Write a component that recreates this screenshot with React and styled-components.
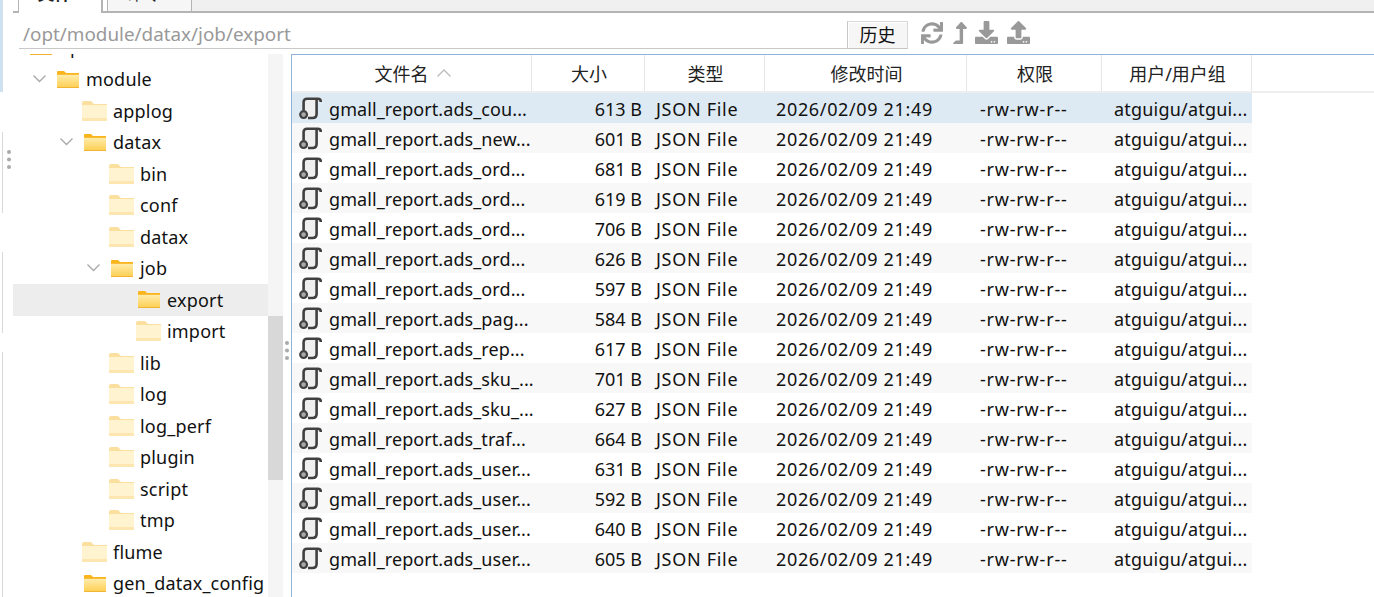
import React from "react";
import styled, { createGlobalStyle } from "styled-components";
import { FaSync, FaLevelUpAlt, FaDownload, FaUpload } from "react-icons/fa";

const FONT = `"Noto Sans", "Noto Sans CJK SC", sans-serif`;

const GlobalStyle = createGlobalStyle`
  html, body {
    margin: 0;
    height: 597px;
    overflow: hidden;
    background: #fff;
    font-family: ${FONT};
    color: #111;
  }
`;

const COLUMNS = "240px 113px 120px 202px 135px 150px";

const treeData = [
  { name: "opt", level: 0, first: true },
  { name: "module", level: 1, chevron: true },
  { name: "applog", level: 2, faded: true },
  { name: "datax", level: 2, chevron: true },
  { name: "bin", level: 3, faded: true },
  { name: "conf", level: 3, faded: true },
  { name: "datax", level: 3, faded: true },
  { name: "job", level: 3, chevron: true },
  { name: "export", level: 4, selected: true },
  { name: "import", level: 4, faded: true },
  { name: "lib", level: 3, faded: true },
  { name: "log", level: 3, faded: true },
  { name: "log_perf", level: 3, faded: true },
  { name: "plugin", level: 3, faded: true },
  { name: "script", level: 3, faded: true },
  { name: "tmp", level: 3, faded: true },
  { name: "flume", level: 2, faded: true },
  { name: "gen_datax_config", level: 2 },
];

const files = [
  ["gmall_report.ads_cou...", "613 B"],
  ["gmall_report.ads_new...", "601 B"],
  ["gmall_report.ads_ord...", "681 B"],
  ["gmall_report.ads_ord...", "619 B"],
  ["gmall_report.ads_ord...", "706 B"],
  ["gmall_report.ads_ord...", "626 B"],
  ["gmall_report.ads_ord...", "597 B"],
  ["gmall_report.ads_pag...", "584 B"],
  ["gmall_report.ads_rep...", "617 B"],
  ["gmall_report.ads_sku_...", "701 B"],
  ["gmall_report.ads_sku_...", "627 B"],
  ["gmall_report.ads_traf...", "664 B"],
  ["gmall_report.ads_user...", "631 B"],
  ["gmall_report.ads_user...", "592 B"],
  ["gmall_report.ads_user...", "640 B"],
  ["gmall_report.ads_user...", "605 B"],
];

function FolderIcon({ faded }) {
  if (faded) {
    return (
      <FadedFolderSvg viewBox="0 0 25 20">
        <path d="M0 2 Q0 0 2 0 H9 L12 3 H25 V5 H0 Z" fill="#fbdf9f" />
        <rect x="0" y="4" width="25" height="16" fill="#fff3d0" />
        <rect x="0" y="17" width="25" height="3" fill="#fde6b0" />
      </FadedFolderSvg>
    );
  }
  return (
    <FolderSvg viewBox="0 0 22 17">
      <defs>
        <linearGradient id="folderBody" x1="0" y1="0" x2="0" y2="1">
          <stop offset="0" stopColor="#ffedb0" />
          <stop offset="1" stopColor="#fdcf50" />
        </linearGradient>
      </defs>
      <path d="M0 1 Q0 0 1 0 H7 L9 2 H22 V4 H0 Z" fill="#fab51c" />
      <rect x="0" y="3" width="22" height="14" fill="url(#folderBody)" />
      <rect x="0" y="3" width="22" height="1" fill="#f9bd3a" />
      <rect x="0" y="16" width="22" height="1" fill="#f3b334" />
    </FolderSvg>
  );
}

function ScriptIcon() {
  return (
    <ScriptSvg viewBox="0 0 23 23">
      <path d="M5 14 V5 Q5 2 8 2 H20 V5 H18 V17 Q18 21 14 21 H8 Z" fill="#efefef" />
      <path
        d="M4.6 13 V5 Q4.6 1.8 8 1.8 H19 Q21.8 1.8 21.8 5 M17.6 2.5 V17 Q17.6 21 13.5 21 H9"
        fill="none"
        stroke="#404040"
        strokeWidth="2.6"
      />
      <circle cx="4.6" cy="17.6" r="3.4" fill="#a8a8a8" stroke="#404040" strokeWidth="2.2" />
    </ScriptSvg>
  );
}

export default function App() {
  return (
    <Page>
      <GlobalStyle />
      <Gutter>
        <EdgeColumn>
          <BlueStrip />
          <EdgeLine $top={40} $height={81} />
          <EdgeLine $top={39} $height={81} />
          <EdgeLine $top={19} $height={245} />
        </EdgeColumn>
        <DotColumn>
          <Grip $top={150} />
        </DotColumn>
      </Gutter>

      <Main>
        <TabBar>
          <Tab $active>文件</Tab>
          <Tab>命令</Tab>
          <TabFiller />
        </TabBar>

        <Toolbar>
          <PathBox>/opt/module/datax/job/export</PathBox>
          <HistoryButton>历史</HistoryButton>
          <ToolIcons>
            <FaSync size={22} />
            <LevelIcon />
            <FaDownload size={23} />
            <FaUpload size={23} />
          </ToolIcons>
        </Toolbar>

        <Body>
          <Tree>
            <TreeInner>
              {treeData.map((item, index) => (
                <TreeRow key={index} $first={item.first} $selected={item.selected} $level={item.level}>
                  {item.chevron && (
                    <ChevronSlot>
                      <svg width="13" height="8" viewBox="0 0 13 8">
                        <path d="M0.5 0.5 L6.5 6.5 L12.5 0.5" fill="none" stroke="#aaa" strokeWidth="1.4" />
                      </svg>
                    </ChevronSlot>
                  )}
                  <FolderSlot>
                    <FolderIcon faded={item.faded} />
                  </FolderSlot>
                  <span>{item.name}</span>
                </TreeRow>
              ))}
            </TreeInner>
          </Tree>

          <ScrollTrack>
            <ScrollThumb />
          </ScrollTrack>

          <Splitter>
            <Grip $top={287} />
          </Splitter>

          <FilePanel>
            <HeaderRow>
              <HeaderCell>
                文件名
                <svg width="14" height="8" viewBox="0 0 14 8">
                  <path d="M0.5 7.5 L7 1 L13.5 7.5" fill="none" stroke="#bbb" strokeWidth="1.3" />
                </svg>
              </HeaderCell>
              <HeaderCell>大小</HeaderCell>
              <HeaderCell>类型</HeaderCell>
              <HeaderCell>修改时间</HeaderCell>
              <HeaderCell>权限</HeaderCell>
              <HeaderCell>用户/用户组</HeaderCell>
            </HeaderRow>

            {files.map(([name, size], index) => (
              <FileRow key={index} $selected={index === 0} $even={index % 2 === 1}>
                <NameCell>
                  <ScriptIcon />
                  <NameText>{name}</NameText>
                </NameCell>
                <SizeCell>{size}</SizeCell>
                <TextCell $left={11} $spacing={0.7}>JSON File</TextCell>
                <TextCell $left={11} $spacing={0.65}>2026/02/09 21:49</TextCell>
                <TextCell $left={13} $spacing={0.8}>-rw-rw-r--</TextCell>
                <TextCell $left={12} $spacing={0.2}>atguigu/atgui...</TextCell>
              </FileRow>
            ))}
          </FilePanel>
        </Body>
      </Main>
    </Page>
  );
}

const Page = styled.div`
  display: flex;
  width: 1374px;
  height: 597px;
  overflow: hidden;
`;

const Gutter = styled.div`
  display: flex;
  width: 13px;
  flex: none;
`;

const EdgeColumn = styled.div`
  width: 3px;
  display: flex;
  flex-direction: column;
`;

const BlueStrip = styled.div`
  height: 92px;
  background: #cfe0ee;
`;

const EdgeLine = styled.div`
  margin-top: ${(p) => p.$top}px;
  height: ${(p) => p.$height}px;
  box-sizing: border-box;
  border-right: 1px solid #d5d9dc;
`;

const DotColumn = styled.div`
  width: 10px;
  display: flex;
  justify-content: flex-end;
  padding-right: 2px;
  box-sizing: border-box;
`;

const Grip = styled.div`
  width: 4px;
  height: 4px;
  margin-top: ${(p) => p.$top}px;
  border-radius: 50%;
  background: #aaa;
  box-shadow: 0 7.5px 0 #aaa, 0 15px 0 #aaa;
`;

const Main = styled.div`
  flex: 1;
  min-width: 0;
  display: flex;
  flex-direction: column;
`;

const TabBar = styled.div`
  display: flex;
  height: 13px;
  flex: none;
  padding-left: 5px;
  box-sizing: border-box;
  overflow: hidden;
  box-shadow: inset 0 -2px 0 #b4b4b4;
`;

const Tab = styled.div`
  width: 85px;
  height: ${(p) => (p.$active ? 13 : 11)}px;
  margin-right: ${(p) => (p.$active ? 4 : 0)}px;
  box-sizing: border-box;
  display: flex;
  align-items: flex-end;
  justify-content: center;
  padding: ${(p) => (p.$active ? "0 11px 7px 0" : "0 11px 5px 0")};
  background: ${(p) => (p.$active ? "#fff" : "#f6f6f6")};
  border: solid #b4b4b4;
  border-width: ${(p) => (p.$active ? "0 2px 0 1px" : "0 1px 0 1px")};
  font-size: 17px;
  font-weight: ${(p) => (p.$active ? 700 : 400)};
  line-height: 24px;
  color: #222;
`;

const TabFiller = styled.div`
  flex: 1;
  background: #f0f0f0;
  height: 11px;
`;

const Toolbar = styled.div`
  display: flex;
  height: 41px;
  flex: none;
  align-items: flex-start;
  padding-left: 6px;
`;

const PathBox = styled.div`
  width: 828px;
  height: 36px;
  box-sizing: border-box;
  padding-left: 4px;
  border-bottom: 1px solid #c8c8c8;
  font-size: 18.85px;
  line-height: 42px;
  color: #999;
`;

const HistoryButton = styled.button`
  width: 61px;
  height: 28px;
  margin: 8px 0 0;
  padding: 0;
  box-sizing: border-box;
  background: #f6f6f6;
  border: 1px solid #d8d8d8;
  border-left-color: #c8c8c8;
  border-bottom-color: #c4c4c4;
  box-shadow: inset 1px 1px 0 #fff;
  font-family: ${FONT};
  font-size: 18px;
  line-height: 26px;
  color: #111;
`;

const ToolIcons = styled.div`
  display: flex;
  align-items: center;
  gap: 9px;
  margin: 8px 0 0 13px;
  color: #999;
`;

const LevelIcon = styled(FaLevelUpAlt)`
  width: 14px;
  height: 22px;
  margin: 0 -1px 0 1px;
`;

const Body = styled.div`
  flex: 1;
  min-height: 0;
  display: flex;
`;

const Tree = styled.div`
  width: 255px;
  flex: none;
  overflow: hidden;
`;

const TreeInner = styled.div`
  margin-top: -24px;
`;

const TreeRow = styled.div`
  display: flex;
  align-items: center;
  height: ${(p) => (p.$first ? 33.5 : 31.5)}px;
  padding-left: ${(p) => 17 + p.$level * 27}px;
  background: ${(p) => (p.$selected ? "#ededed" : "transparent")};
  font-size: 18px;
  letter-spacing: 0.2px;
  white-space: nowrap;
`;

const ChevronSlot = styled.div`
  width: 24px;
  margin-left: -24px;
  display: flex;
  align-items: center;
`;

const FolderSlot = styled.div`
  width: 29px;
  flex: none;
  display: flex;
  align-items: center;
`;

const FolderSvg = styled.svg`
  width: 22px;
  height: 17px;
`;

const FadedFolderSvg = styled.svg`
  width: 25px;
  height: 20px;
  margin-left: -2px;
  flex: none;
`;

const ScrollTrack = styled.div`
  width: 15px;
  flex: none;
  background: #f5f5f5;
`;

const ScrollThumb = styled.div`
  height: 164px;
  margin-top: 262px;
  background: #d8d8d8;
`;

const Splitter = styled.div`
  width: 8px;
  flex: none;
  display: flex;
  justify-content: center;
`;

const FilePanel = styled.div`
  flex: 1;
  min-width: 0;
  border-left: 1px solid #8fb3d6;
  border-top: 1px solid #8fb3d6;
`;

const HeaderRow = styled.div`
  display: grid;
  grid-template-columns: ${COLUMNS};
  height: 38px;
  box-sizing: border-box;
  border-bottom: 2px solid #eeeeee;
`;

const HeaderCell = styled.div`
  display: flex;
  align-items: center;
  justify-content: center;
  gap: 8px;
  box-sizing: border-box;
  padding-left: 2px;
  border-right: 1px solid #e6e6e6;
  font-size: 18px;
  color: #222;
`;

const FileRow = styled.div`
  display: grid;
  grid-template-columns: ${COLUMNS};
  width: 960px;
  height: 30px;
  padding-top: 1px;
  box-sizing: border-box;
  align-items: center;
  background: ${(p) => (p.$selected ? "#deeaf3" : p.$even ? "#f8f8f8" : "#fff")};
  font-size: 18px;
  white-space: nowrap;
`;

const NameCell = styled.div`
  display: flex;
  align-items: center;
  padding-left: 7px;
  gap: 7px;
  margin-top: -1px;
`;

const NameText = styled.span`
  letter-spacing: 0.08px;
  padding-top: 1px;
`;

const ScriptSvg = styled.svg`
  width: 23px;
  height: 23px;
  flex: none;
`;

const SizeCell = styled.div`
  text-align: right;
  padding-right: 3px;
`;

const TextCell = styled.div`
  padding-left: ${(p) => p.$left}px;
  letter-spacing: ${(p) => p.$spacing}px;
`;
